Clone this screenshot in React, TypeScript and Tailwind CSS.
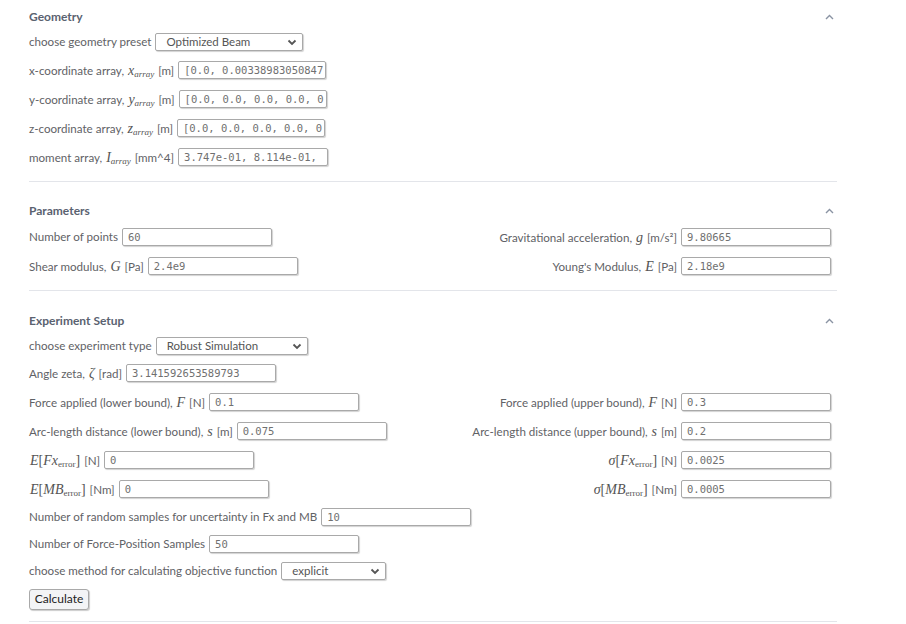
import type { ReactNode } from 'react'

const sans = 'font-["Lato","Open_Sans",sans-serif]'

const Chevron = () => (
  <svg width="9" height="6" viewBox="0 0 9 6" className="text-[#8a93a3]">
    <polyline points="1,5 4.5,1.5 8,5" fill="none" stroke="currentColor" strokeWidth="1.4" />
  </svg>
)

const SelectArrow = () => (
  <svg width="10" height="7" viewBox="0 0 10 7">
    <polyline points="1.5,1.5 5,5 8.5,1.5" fill="none" stroke="#555" strokeWidth="1.8" />
  </svg>
)

const M = ({ children }: { children: ReactNode }) => (
  <span className='font-["Liberation_Serif",serif] italic text-[14px] text-[#555] px-[1px]'>{children}</span>
)

const Sub = ({ children, italic = true }: { children: ReactNode; italic?: boolean }) => (
  <sub className={`font-["Liberation_Serif",serif] text-[9px] ${italic ? 'italic' : 'not-italic'}`}>{children}</sub>
)

const Input = ({ value, w = 150 }: { value: string; w?: number }) => (
  <div
    className='h-[18px] rounded-[2px] border border-[#a9a9a9] bg-white pl-[5px] font-["DejaVu_Sans_Mono",monospace] text-[10.5px] leading-[16px] text-[#707070] shadow-[1px_1px_1px_rgba(0,0,0,0.18)] overflow-hidden whitespace-nowrap'
    style={{ width: w }}
  >
    {value}
  </div>
)

const Select = ({ value, w }: { value: string; w: number }) => (
  <div
    className={`h-[18px] flex items-center justify-between rounded-[2px] border border-[#a9a9a9] bg-white pl-[10px] pr-[5px] text-[11.5px] text-[#555] shadow-[1px_1px_1px_rgba(0,0,0,0.18)] ${sans}`}
    style={{ width: w }}
  >
    <span>{value}</span>
    <SelectArrow />
  </div>
)

const Field = ({ label, children }: { label: ReactNode; children: ReactNode }) => (
  <div className="flex items-center gap-[4px]">
    <span className="whitespace-nowrap">{label}</span>
    {children}
  </div>
)

const Row = ({ mt, children }: { mt: number; children: ReactNode }) => (
  <div className="h-[22px] flex items-center justify-between pr-[6px]" style={{ marginTop: mt }}>
    {children}
  </div>
)

const Header = ({ title, mt }: { title: string; mt: number }) => (
  <div className="h-[16px] flex items-center justify-between pr-[3px]" style={{ marginTop: mt }}>
    <span className="font-bold text-[12px] text-[#5a6270]">{title}</span>
    <Chevron />
  </div>
)

const Err = ({ op, v }: { op: string; v: string }) => (
  <M>
    {op}
    <span className="not-italic">[</span>
    {v}
    <Sub italic={false}>error</Sub>
    <span className="not-italic">]</span>
  </M>
)

export default function App() {
  return (
    <div className={`w-[906px] h-[624px] bg-white overflow-hidden text-[11.6px] text-[#5f6266] ${sans}`}>
      <div className="ml-[29px] w-[808px]">
        {/* Geometry */}
        <div className="border-b border-[#e3e5ea] pb-[13px]">
          <Header title="Geometry" mt={9} />
          <Row mt={6}>
            <Field label="choose geometry preset">
              <Select value="Optimized Beam" w={148} />
            </Field>
          </Row>
          <Row mt={6}>
            <Field label={<>x-coordinate array, <M>x<Sub>array</Sub></M> [m]</>}>
              <Input value="[0.0, 0.00338983050847" w={148} />
            </Field>
          </Row>
          <Row mt={7}>
            <Field label={<>y-coordinate array, <M>y<Sub>array</Sub></M> [m]</>}>
              <Input value="[0.0, 0.0, 0.0, 0.0, 0" w={148} />
            </Field>
          </Row>
          <Row mt={7}>
            <Field label={<>z-coordinate array, <M>z<Sub>array</Sub></M> [m]</>}>
              <Input value="[0.0, 0.0, 0.0, 0.0, 0" w={148} />
            </Field>
          </Row>
          <Row mt={7}>
            <Field label={<>moment array, <M>I<Sub>array</Sub></M> [mm^4]</>}>
              <Input value="3.747e-01, 8.114e-01," w={150} />
            </Field>
          </Row>
        </div>

        {/* Parameters */}
        <div className="border-b border-[#e3e5ea] pb-[13px]">
          <Header title="Parameters" mt={21} />
          <Row mt={7}>
            <Field label="Number of points">
              <Input value="60" />
            </Field>
            <Field label={<>Gravitational acceleration, <M>g</M> [m/s²]</>}>
              <Input value="9.80665" />
            </Field>
          </Row>
          <Row mt={7}>
            <Field label={<>Shear modulus, <M>G</M> [Pa]</>}>
              <Input value="2.4e9" />
            </Field>
            <Field label={<>Young's Modulus, <M>E</M> [Pa]</>}>
              <Input value="2.18e9" />
            </Field>
          </Row>
        </div>

        {/* Experiment Setup */}
        <div className="border-b border-[#e3e5ea] pb-[11px]">
          <Header title="Experiment Setup" mt={22} />
          <Row mt={6}>
            <Field label="choose experiment type">
              <Select value="Robust Simulation" w={152} />
            </Field>
          </Row>
          <Row mt={5}>
            <Field label={<>Angle zeta, <M>ζ</M> [rad]</>}>
              <Input value="3.141592653589793" />
            </Field>
          </Row>
          <Row mt={7}>
            <Field label={<>Force applied (lower bound), <M>F</M> [N]</>}>
              <Input value="0.1" />
            </Field>
            <Field label={<>Force applied (upper bound), <M>F</M> [N]</>}>
              <Input value="0.3" />
            </Field>
          </Row>
          <Row mt={7}>
            <Field label={<>Arc-length distance (lower bound), <M>s</M> [m]</>}>
              <Input value="0.075" />
            </Field>
            <Field label={<>Arc-length distance (upper bound), <M>s</M> [m]</>}>
              <Input value="0.2" />
            </Field>
          </Row>
          <Row mt={7}>
            <Field label={<><Err op="E" v="Fx" /> [N]</>}>
              <Input value="0" />
            </Field>
            <Field label={<><Err op="σ" v="Fx" /> [N]</>}>
              <Input value="0.0025" />
            </Field>
          </Row>
          <Row mt={7}>
            <Field label={<><Err op="E" v="MB" /> [Nm]</>}>
              <Input value="0" />
            </Field>
            <Field label={<><Err op="σ" v="MB" /> [Nm]</>}>
              <Input value="0.0005" />
            </Field>
          </Row>
          <Row mt={6}>
            <Field label="Number of random samples for uncertainty in Fx and MB">
              <Input value="10" />
            </Field>
          </Row>
          <Row mt={5}>
            <Field label="Number of Force-Position Samples">
              <Input value="50" />
            </Field>
          </Row>
          <Row mt={5}>
            <Field label="choose method for calculating objective function">
              <Select value="explicit" w={105} />
            </Field>
          </Row>
          <Row mt={6}>
            <button className="h-[21px] w-[60px] rounded-[3px] border border-[#a9a9a9] bg-[#f3f4f6] text-[12px] text-[#222] shadow-[1px_1px_1px_rgba(0,0,0,0.2)]">
              Calculate
            </button>
          </Row>
        </div>
      </div>
    </div>
  )
}
